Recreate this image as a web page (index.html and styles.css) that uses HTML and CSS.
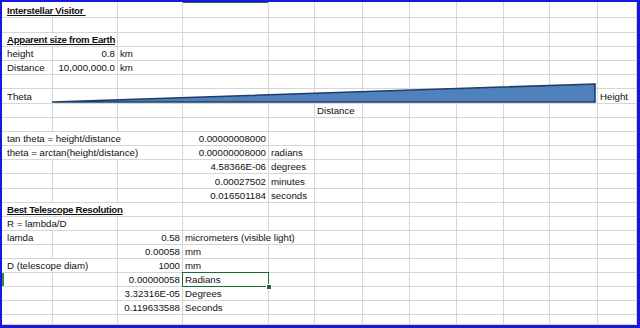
FILE: index.html
```html
<!DOCTYPE html>
<html>
<head>
<meta charset="utf-8">
<link rel="stylesheet" href="styles.css">
</head>
<body>
<div class="frame">
  <div class="sheet">
    <!-- row 1 -->
    <div class="c a s2 b">Interstellar Visitor&nbsp;</div><div class="c"></div><div class="c hdr"></div><div class="c"></div><div class="c"></div><div class="c"></div><div class="c"></div><div class="c"></div><div class="c"></div><div class="c"></div><div class="c"></div>
    <!-- row 2 -->
    <div class="c a"></div><div class="c"></div><div class="c"></div><div class="c"></div><div class="c"></div><div class="c"></div><div class="c"></div><div class="c"></div><div class="c"></div><div class="c"></div><div class="c"></div><div class="c"></div>
    <!-- row 3 -->
    <div class="c a s2 b">Apparent size from Earth</div><div class="c"></div><div class="c"></div><div class="c"></div><div class="c"></div><div class="c"></div><div class="c"></div><div class="c"></div><div class="c"></div><div class="c"></div><div class="c"></div>
    <!-- row 4 -->
    <div class="c a">height</div><div class="c r">0.8</div><div class="c">km</div><div class="c"></div><div class="c"></div><div class="c"></div><div class="c"></div><div class="c"></div><div class="c"></div><div class="c"></div><div class="c"></div><div class="c"></div>
    <!-- row 5 -->
    <div class="c a">Distance</div><div class="c r">10,000,000.0</div><div class="c">km</div><div class="c"></div><div class="c"></div><div class="c"></div><div class="c"></div><div class="c"></div><div class="c"></div><div class="c"></div><div class="c"></div><div class="c"></div>
    <!-- row 6 -->
    <div class="c a"></div><div class="c"></div><div class="c"></div><div class="c"></div><div class="c"></div><div class="c"></div><div class="c"></div><div class="c"></div><div class="c"></div><div class="c"></div><div class="c"></div><div class="c"></div>
    <!-- row 7 -->
    <div class="c a">Theta</div><div class="c"></div><div class="c"></div><div class="c"></div><div class="c"></div><div class="c"></div><div class="c"></div><div class="c"></div><div class="c"></div><div class="c"></div><div class="c"></div><div class="c">Height</div>
    <!-- row 8 -->
    <div class="c a"></div><div class="c"></div><div class="c"></div><div class="c"></div><div class="c"></div><div class="c">Distance</div><div class="c"></div><div class="c"></div><div class="c"></div><div class="c"></div><div class="c"></div><div class="c"></div>
    <!-- row 9 -->
    <div class="c a"></div><div class="c"></div><div class="c"></div><div class="c"></div><div class="c"></div><div class="c"></div><div class="c"></div><div class="c"></div><div class="c"></div><div class="c"></div><div class="c"></div><div class="c"></div>
    <!-- row 10 -->
    <div class="c a s3">tan theta = height/distance</div><div class="c r">0.00000008000</div><div class="c"></div><div class="c"></div><div class="c"></div><div class="c"></div><div class="c"></div><div class="c"></div><div class="c"></div><div class="c"></div>
    <!-- row 11 -->
    <div class="c a s3">theta = arctan(height/distance)</div><div class="c r">0.00000008000</div><div class="c">radians</div><div class="c"></div><div class="c"></div><div class="c"></div><div class="c"></div><div class="c"></div><div class="c"></div><div class="c"></div>
    <!-- row 12 -->
    <div class="c a"></div><div class="c"></div><div class="c"></div><div class="c r">4.58366E-06</div><div class="c">degrees</div><div class="c"></div><div class="c"></div><div class="c"></div><div class="c"></div><div class="c"></div><div class="c"></div><div class="c"></div>
    <!-- row 13 -->
    <div class="c a"></div><div class="c"></div><div class="c"></div><div class="c r">0.00027502</div><div class="c">minutes</div><div class="c"></div><div class="c"></div><div class="c"></div><div class="c"></div><div class="c"></div><div class="c"></div><div class="c"></div>
    <!-- row 14 -->
    <div class="c a"></div><div class="c"></div><div class="c"></div><div class="c r">0.016501184</div><div class="c">seconds</div><div class="c"></div><div class="c"></div><div class="c"></div><div class="c"></div><div class="c"></div><div class="c"></div><div class="c"></div>
    <!-- row 15 -->
    <div class="c a s3 b">Best Telescope Resolution</div><div class="c"></div><div class="c"></div><div class="c"></div><div class="c"></div><div class="c"></div><div class="c"></div><div class="c"></div><div class="c"></div><div class="c"></div>
    <!-- row 16 -->
    <div class="c a s2">R = lambda/D</div><div class="c"></div><div class="c"></div><div class="c"></div><div class="c"></div><div class="c"></div><div class="c"></div><div class="c"></div><div class="c"></div><div class="c"></div><div class="c"></div>
    <!-- row 17 -->
    <div class="c a">lamda</div><div class="c"></div><div class="c r">0.58</div><div class="c s2">micrometers (visible light)</div><div class="c"></div><div class="c"></div><div class="c"></div><div class="c"></div><div class="c"></div><div class="c"></div><div class="c"></div>
    <!-- row 18 -->
    <div class="c a"></div><div class="c"></div><div class="c r">0.00058</div><div class="c">mm</div><div class="c"></div><div class="c"></div><div class="c"></div><div class="c"></div><div class="c"></div><div class="c"></div><div class="c"></div><div class="c"></div>
    <!-- row 19 -->
    <div class="c a s2">D (telescope diam)</div><div class="c r">1000</div><div class="c">mm</div><div class="c"></div><div class="c"></div><div class="c"></div><div class="c"></div><div class="c"></div><div class="c"></div><div class="c"></div><div class="c"></div>
    <!-- row 20 -->
    <div class="c a rowhdr"></div><div class="c"></div><div class="c r">0.00000058</div><div class="c sel">Radians</div><div class="c"></div><div class="c"></div><div class="c"></div><div class="c"></div><div class="c"></div><div class="c"></div><div class="c"></div><div class="c"></div>
    <!-- row 21 -->
    <div class="c a"></div><div class="c"></div><div class="c r">3.32316E-05</div><div class="c">Degrees</div><div class="c"></div><div class="c"></div><div class="c"></div><div class="c"></div><div class="c"></div><div class="c"></div><div class="c"></div><div class="c"></div>
    <!-- row 22 -->
    <div class="c a"></div><div class="c"></div><div class="c r">0.119633588</div><div class="c">Seconds</div><div class="c"></div><div class="c"></div><div class="c"></div><div class="c"></div><div class="c"></div><div class="c"></div><div class="c"></div><div class="c"></div>
    <!-- row 23 -->
    <div class="c a"></div><div class="c"></div><div class="c"></div><div class="c"></div><div class="c"></div><div class="c"></div><div class="c"></div><div class="c"></div><div class="c"></div><div class="c"></div><div class="c"></div><div class="c"></div>
  </div>
  <svg class="shape" width="635" height="323" viewBox="0 0 635 323">
    <polygon points="50,100 593,82 593,100" fill="#4f81bd" stroke="#1f3d66" stroke-width="1.6" stroke-linejoin="miter"/>
  </svg>
</div>
</body>
</html>
```
FILE: styles.css
```css
html, body {
  margin: 0;
  padding: 0;
  background: #ffffff;
}

.frame {
  position: relative;
  width: 635px;
  height: 323px;
  border-style: solid;
  border-color: #1717e0;
  border-width: 2px 3px 3px 2px;
  overflow: hidden;
  background: #ffffff;
}

.sheet {
  display: grid;
  grid-template-columns: 51px 65px 65px 86px 46px 48px 47px 47px 47px 46px 48px 39px;
  grid-template-rows: 16px 15px 14px 14px 14px 14px 15px 14px 14px 14px 14px 14px 15px 14px 14px 14px 14px 14px 14px 14px 14px 14px 10px;
  font-family: "Liberation Sans", Arial, sans-serif;
  font-size: 9.7px;
  color: #111111;
}

.c {
  box-sizing: border-box;
  border-right: 1px solid #d6d6d6;
  border-bottom: 1px solid #d6d6d6;
  display: flex;
  align-items: flex-end;
  line-height: 11px;
  padding: 0 2px 1px 2px;
  white-space: nowrap;
  overflow: visible;
  position: relative;
}

.a {
  padding-left: 5px;
}

.s2 {
  grid-column: span 2;
}

.s3 {
  grid-column: span 3;
}

.r {
  justify-content: flex-end;
}

.b {
  font-weight: bold;
  letter-spacing: -0.3px;
  text-decoration: underline;
  text-underline-offset: 1px;
}

.hdr {
  box-shadow: inset 0 1px 0 #1e6b3c;
}

.rowhdr {
  box-shadow: inset 2px 0 0 #2e8a4e;
}

.sel::after {
  content: "";
  position: absolute;
  left: -1px;
  top: -1px;
  right: -1px;
  bottom: -1px;
  border: 1.5px solid #1d6a39;
}

.sel::before {
  content: "";
  position: absolute;
  right: -3px;
  bottom: -3px;
  width: 4px;
  height: 4px;
  background: #1d6a39;
  border: 1px solid #ffffff;
  box-sizing: content-box;
  z-index: 2;
  transform: translate(1px, 1px);
}

.shape {
  position: absolute;
  left: 0;
  top: 0;
  pointer-events: none;
}
```
